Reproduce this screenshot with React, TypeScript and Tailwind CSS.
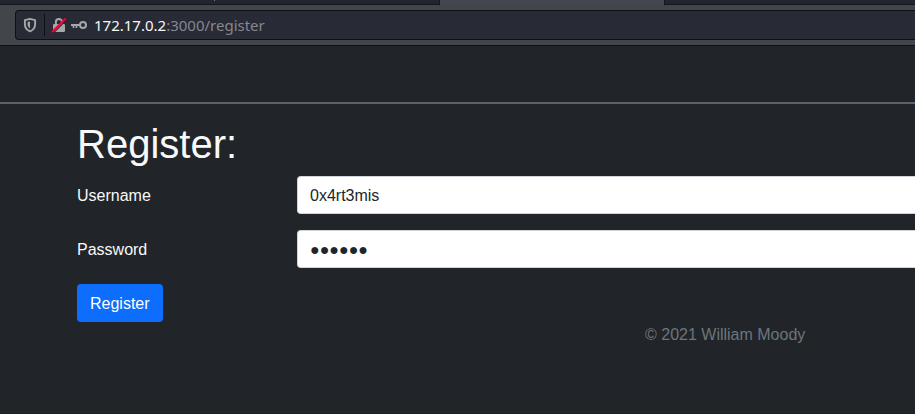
import React from 'react';

function ShieldIcon() {
  return (
    <svg className="block h-4 w-4 shrink-0" viewBox="0 0 16 16" fill="none">
      <path
        d="M8 1.9 L13.1 3.1 V7.2 C13.1 10.6 11.4 12.9 8 14.3 C4.6 12.9 2.9 10.6 2.9 7.2 V3.1 Z"
        stroke="#a6a7a8"
        strokeWidth="1.9"
        strokeLinejoin="round"
      />
      <path d="M8 4.5 V11.4 C6.3 10.4 5.6 9.1 5.6 7.3 V5.1 Z" fill="#a6a7a8" />
    </svg>
  );
}

function InsecureLockIcon() {
  return (
    <svg className="block h-4 w-4 shrink-0" viewBox="0 0 16 16" fill="none">
      <path d="M4.9 8 V5.2 a3.1 3.1 0 0 1 6.2 0 V8" stroke="#a6a7a8" strokeWidth="2" />
      <rect x="2" y="7" width="12" height="8" rx="1.2" fill="#a6a7a8" />
      <path d="M2.4 15.9 L16 2.3" stroke="#282a36" strokeWidth="1.2" />
      <path d="M1.1 15 L14.7 1.4" stroke="#f5003d" strokeWidth="2" />
    </svg>
  );
}

function KeyIcon() {
  return (
    <svg className="block h-4 w-4 shrink-0" viewBox="0 0 16 16" fill="none">
      <circle cx="12" cy="8" r="3" stroke="#a6a7a8" strokeWidth="2" />
      <path d="M0 8 H9" stroke="#a6a7a8" strokeWidth="2" />
      <path d="M2.5 8 V11 M5.5 8 V11" stroke="#a6a7a8" strokeWidth="1.7" />
    </svg>
  );
}

function BrowserChrome() {
  return (
    <div className="h-[46px] border-b border-[#0e1014] bg-[#42454a]">
      <div className="flex h-[5px]">
        <div className="w-[440px] border-r border-b border-[#15171e] bg-[#22242e]">
          <div className="ml-[214px] h-px w-px bg-[#777982]" />
        </div>
        <div className="w-[224px] bg-[#44474f]" />
        <div className="flex-1 border-b border-l border-[#15171e] bg-[#22242e]" />
      </div>
      <div className="pt-[5px] pl-[15px]">
        <div className="flex h-[30px] items-center rounded-l-[4px] border border-r-0 border-[#0e1014] bg-[#282a36]">
          <div className="flex h-full w-[28px] items-center pl-[6px]">
            <ShieldIcon />
          </div>
          <div className="mr-[6px] h-[22px] w-px shrink-0 bg-[#0e1014]" />
          <InsecureLockIcon />
          <div className="w-1 shrink-0" />
          <KeyIcon />
          <div className="ml-[7px] font-['Noto_Sans',sans-serif] text-[15px] leading-[20px] whitespace-nowrap text-[#86878f]">
            <span className="text-[#f8f8f2]">172.17.0.2</span>:3000/register
          </div>
        </div>
      </div>
    </div>
  );
}

function Field({ id, label, value }: { id: string; label: string; value: string }) {
  return (
    <div className="mb-4 flex">
      <label htmlFor={id} className="w-[220px] shrink-0 pt-2 pb-[6px] leading-6">
        {label}
      </label>
      <input
        id={id}
        type="text"
        defaultValue={value}
        className="h-[38px] min-w-0 flex-1 rounded-l-[4px] border border-r-0 border-[#ced4da] bg-white px-3 pt-[7px] pb-[5px] text-base leading-6 text-[#212529] outline-none"
      />
    </div>
  );
}

export default function App() {
  return (
    <div className="flex h-[414px] w-[915px] flex-col overflow-hidden bg-[#212529] font-['Liberation_Sans',Arial,sans-serif] text-base text-[#f8f9fa]">
      <BrowserChrome />
      <div className="h-[58px] border-b-2 border-[#5c636a]" />
      <main className="pt-4 pl-[77px]">
        <h1 className="mb-2 text-[40px] leading-[48px] font-normal">Register:</h1>
        <Field id="username" label="Username" value="0x4rt3mis" />
        <Field id="password" label="Password" value="●●●●●●" />
        <button className="block h-[38px] rounded-[4px] bg-[#0d6efd] px-[13px] pt-2 pb-[6px] leading-6 text-white">
          Register
        </button>
      </main>
      <footer className="pt-px pl-[645px] leading-6 text-[#6c757d]">© 2021 William Moody</footer>
      <div className="mt-auto h-px bg-[#241b25]" />
    </div>
  );
}
